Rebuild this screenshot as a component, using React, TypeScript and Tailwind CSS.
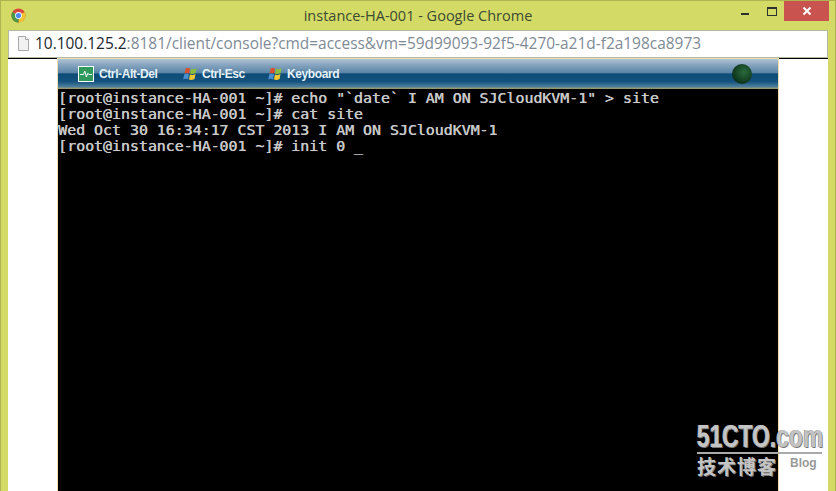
import React from "react";

function ChromeLogo() {
  return (
    <svg width="15" height="15" viewBox="0 0 16 16">
      <circle cx="8" cy="8" r="7.5" fill="#d9483b" />
      <path d="M8 8 L14.5 4.2 A7.5 7.5 0 0 1 8 15.5 Z" fill="#f2c230" />
      <path d="M8 8 L8 15.5 A7.5 7.5 0 0 1 1.5 4.2 Z" fill="#4a9a45" />
      <circle cx="8" cy="8" r="3.7" fill="#fff" />
      <circle cx="8" cy="8" r="2.8" fill="#4c8bf0" />
    </svg>
  );
}

function PageIcon() {
  return (
    <svg width="13" height="16" viewBox="0 0 13 16">
      <path d="M1.5 .5 H8.5 L11.5 3.5 V14.5 H1.5 Z" fill="#f1f1f1" stroke="#a8a8a8" />
      <path d="M8.5 .5 V3.5 H11.5" fill="#fff" stroke="#a8a8a8" />
    </svg>
  );
}

function WinLogo() {
  return (
    <svg width="14" height="14" viewBox="0 0 15 14">
      <path d="M3 .8 Q5 0 7.6 1.2 L6.6 6.4 Q4 5.2 1.6 6.4 Z" fill="#d8502c" />
      <path d="M8.6 1.4 Q11.6 2.4 14.6 .8 L13.6 6 Q10.6 7.6 7.6 6.6 Z" fill="#8cbc3e" />
      <path d="M1.4 7.4 Q4 6.2 6.4 7.4 L5.4 12.8 Q3 11.6 .2 12.8 Z" fill="#4a90d0" />
      <path d="M7.4 7.6 Q10.4 8.6 13.4 7 L12.4 12.4 Q9.4 14 6.4 13 Z" fill="#f5c82f" />
    </svg>
  );
}

function MonitorIcon() {
  return (
    <svg width="16" height="16" viewBox="0 0 16 16">
      <rect x=".5" y=".5" width="15" height="15" fill="#2f9a5c" stroke="#fff" />
      <path d="M2 8.5 H5.5 L6.8 5 L8.4 11 L9.8 7.2 L10.8 8.5 H14" fill="none" stroke="#fff" strokeWidth="1" />
    </svg>
  );
}

function ToolButton({ icon, label, className }: { icon: React.ReactNode; label: string; className: string }) {
  return (
    <div className={`flex items-center ${className}`}>
      {icon}
      <span className="ml-[5px] text-[12px] font-bold text-[#e6f2f8] font-['Liberation_Sans',sans-serif] tracking-[-0.4px]">
        {label}
      </span>
    </div>
  );
}

const lines = [
  '[root@instance-HA-001 ~]# echo "`date` I AM ON SJCloudKVM-1" > site',
  "[root@instance-HA-001 ~]# cat site",
  "Wed Oct 30 16:34:17 CST 2013 I AM ON SJCloudKVM-1",
  "[root@instance-HA-001 ~]# init 0 _",
];

export default function App() {
  return (
    <div className="relative flex h-[491px] w-[836px] flex-col overflow-hidden border border-b-0 border-[#aeb352] bg-[#d3da66] font-['Liberation_Sans',sans-serif]">
      <div className="grid h-[29px] shrink-0 grid-cols-[1fr_auto_1fr] items-start">
        <div className="ml-[10px] mt-[7px]">
          <ChromeLogo />
        </div>
        <div className="pt-[6px] text-center text-[14.5px] leading-[18px] text-[#3c4a32] font-['Open_Sans',sans-serif]">
          instance-HA-001 - Google Chrome
        </div>
        <div className="flex items-start justify-end">
          <div className="mt-[12px] mr-[18px] h-[2px] w-[8px] bg-[#2a3030]" />
          <div className="mt-[6px] mr-[7px] h-[6px] w-[8px] box-content border border-t-[2px] border-[#2a3030]" />
          <div className="mr-[6px] flex h-[20px] w-[45px] items-center justify-center bg-[#c8534f] text-white">
            <svg width="10" height="10" viewBox="0 0 10 10">
              <path d="M1.5 1.5 L8.5 8.5 M8.5 1.5 L1.5 8.5" stroke="#fff" strokeWidth="2" />
            </svg>
          </div>
        </div>
      </div>
      <div className="mx-[7px] flex min-h-0 flex-1 flex-col">
        <div className="flex h-[28px] shrink-0 items-center border border-[#b5b9a0] bg-white pl-[8px]">
          <PageIcon />
          <div className="ml-[5px] whitespace-nowrap text-[15.45px] text-[#808b96] font-['Open_Sans',sans-serif]">
            <span className="text-[#20282e]">10.100.125.2</span>:8181/client/console?cmd=access&amp;vm=59d99093-92f5-4270-a21d-f2a198ca8973
          </div>
        </div>
        <div className="min-h-0 flex-1 border-t border-t-black bg-white pl-[50px] pr-[50px]">
          <div className="flex h-full w-[720px] flex-col shadow-[0_0_0_1px_#f0dcb0]">
            <div className="flex h-[30px] shrink-0 items-center bg-[linear-gradient(#b0c4d4_0%,#86a4bf_20%,#5c86a8_45%,#0e4c78_50%,#15527e_75%,#4d7f9c_92%,#a79f66_100%)] pl-[20px]">
              <ToolButton icon={<MonitorIcon />} label="Ctrl-Alt-Del" className="w-[105px]" />
              <ToolButton icon={<WinLogo />} label="Ctrl-Esc" className="w-[85px]" />
              <ToolButton icon={<WinLogo />} label="Keyboard" className="w-[90px]" />
              <div className="ml-auto mr-[26px] h-[20px] w-[20px] rounded-full bg-[radial-gradient(circle_at_60%_40%,#2a6a3c,#0a3018_75%)]" />
            </div>
            <div className="flex-1 bg-black pt-[1px] font-['DejaVu_Sans_Mono',monospace] text-[14.9px] leading-[16px] text-[#c8c8c8] [text-shadow:0.5px_0_0_#c8c8c8] whitespace-pre">
              {lines.map((l) => (
                <div key={l}>{l}</div>
              ))}
            </div>
          </div>
        </div>
      </div>
      <div className="absolute left-[696px] top-[421px] w-[126px] text-[#c4c4c4] font-['Liberation_Sans',sans-serif]">
        <div className="w-[170px] origin-left scale-x-[0.735] whitespace-nowrap text-[31px] leading-[29px] font-bold [text-shadow:1px_1px_0_#777,-1px_0_0_#999]">
          51CTO.com
        </div>
        <div className="mt-[1px] h-[2px] w-[125px] bg-[#aaaaaa]" />
        <div className="flex items-start">
          <span className="text-[19px] leading-[24px] font-bold font-['Noto_Sans_CJK_SC',sans-serif] tracking-[1px] [text-shadow:1px_1px_0_#777]">技术博客</span>
          <span className="ml-[13px] text-[12px] font-bold leading-[18px] text-[#999]">Blog</span>
        </div>
      </div>
    </div>
  );
}
